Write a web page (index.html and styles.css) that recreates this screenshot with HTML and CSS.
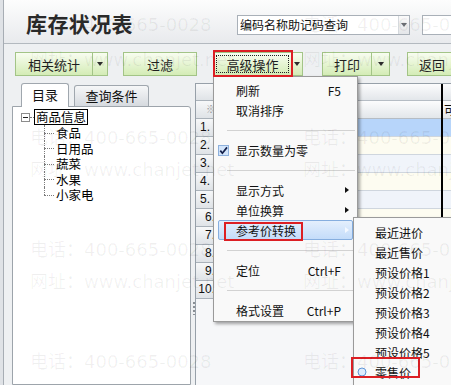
FILE: index.html
```html
<!DOCTYPE html>
<html lang="zh-CN">
<head>
<meta charset="utf-8">
<title>库存状况表</title>
<link rel="stylesheet" href="styles.css">
</head>
<body>
<div class="app">
  <header class="head">
    <h1 class="title">库存状况表</h1>
    <div class="combo">
      <span class="combo-text">编码名称助记码查询</span>
      <span class="combo-btn"><i class="tri-down light"></i></span>
    </div>
    <div class="search"></div>
  </header>

  <div class="toolbar">
    <div class="group">
      <div class="btn w-stat">相关统计</div>
      <div class="btn drop w15"><i class="tri-down"></i></div>
    </div>
    <div class="btn w-filter gap15">过滤</div>
    <div class="group gap16">
      <div class="btn w-adv focus">高级操作</div>
      <div class="btn drop w11"><i class="tri-down"></i></div>
    </div>
    <div class="group gap19">
      <div class="btn w-print">打印</div>
      <div class="btn drop w18"><i class="tri-down"></i></div>
    </div>
    <div class="btn w-back gap17">返回</div>
  </div>

  <div class="main">
    <aside class="side">
      <div class="tabs">
        <div class="tab active">目录</div>
        <div class="tab inactive">查询条件</div>
      </div>
      <div class="tree-panel">
        <div class="tree">
          <div class="root">
            <span class="expander"><span class="minus"></span></span>
            <span class="connector"></span>
            <span class="root-label">商品信息</span>
          </div>
          <ul class="children">
            <li>食品</li>
            <li>日用品</li>
            <li>蔬菜</li>
            <li>水果</li>
            <li>小家电</li>
          </ul>
        </div>
      </div>
    </aside>

    <div class="splitter"><span class="grip"></span></div>

    <section class="grid">
      <div class="grow ghead h1">
        <div class="rh"></div>
        <div class="c-main"></div>
        <div class="c-bar"></div>
        <div class="c-next"></div>
      </div>
      <div class="grow ghead h2">
        <div class="rh star">※</div>
        <div class="c-main"></div>
        <div class="c-bar"></div>
        <div class="c-next">可</div>
      </div>
      <div class="grow sel"><div class="rh">1.</div><div class="c-main"></div><div class="c-bar"></div><div class="c-next"></div></div>
      <div class="grow cream"><div class="rh">2.</div><div class="c-main"></div><div class="c-bar"></div><div class="c-next"></div></div>
      <div class="grow pale"><div class="rh">3.</div><div class="c-main"></div><div class="c-bar"></div><div class="c-next"></div></div>
      <div class="grow cream"><div class="rh">4.</div><div class="c-main"></div><div class="c-bar"></div><div class="c-next"></div></div>
      <div class="grow pale"><div class="rh">5.</div><div class="c-main"></div><div class="c-bar"></div><div class="c-next"></div></div>
      <div class="grow cream"><div class="rh rt">6.</div><div class="c-main"></div><div class="c-bar"></div><div class="c-next"></div></div>
      <div class="grow pale"><div class="rh rt">7.</div><div class="c-main"></div><div class="c-bar"></div><div class="c-next"></div></div>
      <div class="grow cream"><div class="rh rt">8.</div><div class="c-main"></div><div class="c-bar"></div><div class="c-next"></div></div>
      <div class="grow pale"><div class="rh rt">9.</div><div class="c-main"></div><div class="c-bar"></div><div class="c-next"></div></div>
      <div class="grow cream"><div class="rh rt">10.</div><div class="c-main"></div><div class="c-bar"></div><div class="c-next"></div></div>
    </section>
  </div>
</div>

<div class="menu main-menu">
  <div class="mi"><span class="ico"></span><span class="lbl">刷新</span><span class="key">F5</span><span class="sub"></span></div>
  <div class="mi"><span class="ico"></span><span class="lbl">取消排序</span><span class="key"></span><span class="sub"></span></div>
  <div class="sep"></div>
  <div class="mi"><span class="ico"><svg class="check" width="11" height="11" viewBox="0 0 11 11"><rect x="0.5" y="0.5" width="10" height="10" fill="#d3e5fb" stroke="#8db0dc"/><path d="M2.3 5.6 L4.4 8.2 L9 2.4" fill="none" stroke="#14204a" stroke-width="1.7"/></svg></span><span class="lbl">显示数量为零</span><span class="key"></span><span class="sub"></span></div>
  <div class="sep"></div>
  <div class="mi"><span class="ico"></span><span class="lbl">显示方式</span><span class="key"></span><span class="sub"><i class="tri-right"></i></span></div>
  <div class="mi"><span class="ico"></span><span class="lbl">单位换算</span><span class="key"></span><span class="sub"><i class="tri-right"></i></span></div>
  <div class="mi hot"><span class="ico"></span><span class="lbl">参考价转换</span><span class="key"></span><span class="sub"><i class="tri-right white"></i></span></div>
  <div class="sep"></div>
  <div class="mi"><span class="ico"></span><span class="lbl">定位</span><span class="key">Ctrl+F</span><span class="sub"></span></div>
  <div class="sep"></div>
  <div class="mi"><span class="ico"></span><span class="lbl">格式设置</span><span class="key">Ctrl+P</span><span class="sub"></span></div>
</div>

<div class="menu sub-menu">
  <div class="mi"><span class="ico2"></span><span class="lbl">最近进价</span></div>
  <div class="mi"><span class="ico2"></span><span class="lbl">最近售价</span></div>
  <div class="mi"><span class="ico2"></span><span class="lbl">预设价格1</span></div>
  <div class="mi"><span class="ico2"></span><span class="lbl">预设价格2</span></div>
  <div class="mi"><span class="ico2"></span><span class="lbl">预设价格3</span></div>
  <div class="mi"><span class="ico2"></span><span class="lbl">预设价格4</span></div>
  <div class="mi"><span class="ico2"></span><span class="lbl">预设价格5</span></div>
  <div class="mi"><span class="ico2"><svg width="10" height="10" viewBox="0 0 10 10"><circle cx="5" cy="5" r="4" fill="#dcebfd" stroke="#5f95d6" stroke-width="1"/></svg></span><span class="lbl">零售价</span></div>
</div>

<div class="mark mark-adv"></div>
<div class="mark mark-ref"></div>
<div class="mark mark-retail"></div>

<div class="wm">
  <span class="wl y1">电话：400-665-0028</span>
  <span class="wr y1">电话：400-665-0028</span>
  <span class="wl y2">网址：www.chanjet.net</span>
  <span class="wr y2">网址：www.chanjet.net</span>
  <span class="wl y3">电话：400-665-0028</span>
  <span class="wr y3">电话：400-665-0028</span>
  <span class="wl y4">网址：www.chanjet.net</span>
  <span class="wr y4">网址：www.chanjet.net</span>
  <span class="wl y5">电话：400-665-0028</span>
  <span class="wr y5">电话：400-665-0028</span>
  <span class="wl y6">网址：www.chanjet.net</span>
  <span class="wr y6">网址：www.chanjet.net</span>
  <span class="wl y7">电话：400-665-0028</span>
  <span class="wr y7">电话：400-665-0028</span>
  <span class="wl y8">网址：www.chanjet.net</span>
  <span class="wr y8">网址：www.chanjet.net</span>
</div>
</body>
</html>
```

FILE: styles.css
```css
* { box-sizing: border-box; }
html, body { margin: 0; padding: 0; }
body {
  width: 451px;
  height: 385px;
  overflow: hidden;
  position: relative;
  background: #dfe2e6;
  font-family: "Noto Sans CJK SC", sans-serif;
  font-size: 12px;
  color: #111;
}

.app {
  margin-left: 3px;
  height: 385px;
  border-left: 1px solid #a7adb4;
  background: #eef0f2;
  display: flex;
  flex-direction: column;
  overflow: hidden;
}

/* header */
.head {
  height: 44px;
  flex: none;
  display: flex;
  align-items: flex-start;
  background: linear-gradient(#fdfdfd, #e8eaed);
  border-bottom: 1px solid #b3b9bf;
  padding-left: 22px;
  overflow: hidden;
}
.title {
  margin: 0;
  width: 211px;
  flex: none;
  font-size: 21px;
  font-weight: 700;
  line-height: 24px;
  padding-top: 11px;
  color: #2a2a2a;
  letter-spacing: 0.4px;
}
.combo {
  margin-top: 15px;
  width: 173px;
  height: 20px;
  flex: none;
  display: flex;
  background: #fff;
  border: 1px solid #a9b0b8;
}
.combo-text {
  flex: 1;
  padding-left: 2px;
  line-height: 18px;
  font-size: 12px;
  color: #111;
}
.combo-btn {
  width: 11px;
  border-left: 1px solid #d5d9dd;
  background: linear-gradient(#fafafa, #e4e6e9);
  display: flex;
  align-items: center;
  justify-content: center;
}
.search {
  margin-top: 15px;
  margin-left: 12px;
  width: 60px;
  height: 20px;
  flex: none;
  background: #fff;
  border: 1px solid #a9b0b8;
}

.tri-down {
  display: block;
  width: 0;
  height: 0;
  border-left: 3.5px solid transparent;
  border-right: 3.5px solid transparent;
  border-top: 4px solid #2d2d2d;
}
.tri-down.light { border-top-color: #6a6f75; }

/* toolbar */
.toolbar {
  height: 36px;
  flex: none;
  display: flex;
  align-items: flex-start;
  padding: 8px 0 0 11px;
}
.group { display: flex; flex: none; }
.btn {
  height: 24px;
  flex: none;
  display: flex;
  align-items: center;
  justify-content: center;
  background: linear-gradient(#f8fdf0, #d4ecb6);
  border: 1px solid #a3c487;
  font-size: 13px;
  color: #1f1f1f;
  line-height: 1;
}
.drop { border-left: none; }
.w-stat { width: 78px; }
.w15 { width: 15px; }
.w11 { width: 11px; }
.w18 { width: 18px; }
.w-filter { width: 74px; }
.w-adv { width: 79px; }
.w-print { width: 50px; }
.w-back { width: 50px; }
.gap15 { margin-left: 15px; }
.gap16 { margin-left: 16px; }
.gap19 { margin-left: 19px; }
.gap17 { margin-left: 17px; }
.focus { outline: 1px dotted #222; outline-offset: -4px; }

/* main */
.main {
  flex: 1;
  min-height: 0;
  display: flex;
  padding-left: 8px;
}
.side {
  width: 179px;
  flex: none;
  display: flex;
  flex-direction: column;
  padding-top: 3px;
}
.tabs {
  height: 23px;
  display: flex;
  align-items: flex-end;
  gap: 5px;
  padding-left: 9px;
  position: relative;
  z-index: 1;
}
.tab {
  border: 1px solid #a0a7ae;
  border-bottom: none;
  border-radius: 3px 3px 0 0;
  font-size: 13px;
  text-align: center;
  color: #111;
}
.tab.active {
  width: 48px;
  height: 24px;
  line-height: 22px;
  background: #fff;
  margin-bottom: -1px;
}
.tab.inactive {
  width: 75px;
  height: 21px;
  line-height: 20px;
  background: linear-gradient(#f6f7f8, #d6dadf);
}
.tree-panel {
  flex: 1;
  background: #fff;
  border: 1px solid #9da4ab;
  border-radius: 0 3px 0 0;
}
.tree { padding: 2px 0 0 8px; }
.root {
  display: flex;
  align-items: center;
  height: 16px;
}
.expander {
  width: 9px;
  height: 9px;
  flex: none;
  border: 1px solid #8c8c8c;
  background: #fff;
  display: flex;
  align-items: center;
  justify-content: center;
}
.minus { width: 5px; height: 1px; background: #222; }
.connector {
  width: 4px;
  flex: none;
  border-top: 1px dotted #7a7a7a;
}
.root-label {
  border: 1px solid #000;
  padding: 0 1px;
  height: 16px;
  line-height: 14px;
  font-size: 12.5px;
  color: #000;
}
.children {
  list-style: none;
  margin: 0 0 0 23px;
  padding: 0;
}
.children li {
  position: relative;
  height: 15.5px;
  line-height: 15.5px;
  padding-left: 12px;
  font-size: 12.5px;
  color: #000;
}
.children li::before {
  content: "";
  position: absolute;
  left: 0;
  top: 50%;
  width: 10px;
  border-top: 1px dotted #7a7a7a;
}
.children li::after {
  content: "";
  position: absolute;
  left: 0;
  top: 0;
  bottom: 0;
  border-left: 1px dotted #7a7a7a;
}
.children li:last-child::after { bottom: 50%; }

.splitter {
  width: 4px;
  flex: none;
  display: flex;
  flex-direction: column;
}
.grip {
  width: 2px;
  height: 13px;
  margin: 222px 0 0 2px;
  background: repeating-linear-gradient(#8a8f95 0 2px, transparent 2px 4px);
}

/* grid */
.grid {
  flex: 1;
  min-width: 0;
  margin-top: 3px;
  border-left: 1px solid #97a0a9;
  border-top: 1px solid #97a0a9;
  background: #f6f7f9;
  display: flex;
  flex-direction: column;
  overflow: hidden;
}
.grow {
  display: flex;
  height: 18px;
  flex: none;
}
.grow.h1 { height: 17px; }
.ghead { background: linear-gradient(#fcfcfd, #e1e5e9); }
.ghead .c-main, .ghead .c-next { border-bottom: 1px solid #b5bcc4; }
.rh {
  width: 24px;
  flex: none;
  border-right: 1px solid #a9b1b9;
  border-bottom: 1px solid #a9b1b9;
  background: linear-gradient(#f7f8f9, #dfe3e7);
  font-family: "Liberation Sans", sans-serif;
  font-size: 12px;
  line-height: 17px;
  padding-left: 4px;
  color: #111;
  overflow: hidden;
  white-space: nowrap;
}
.rh.rt { text-align: right; padding: 0 4px 0 0; }
.rh.star { color: #9a9a9a; padding-left: 10px; font-size: 10px; }
.c-main {
  width: 221px;
  flex: none;
  border-bottom: 1px solid #cfd6de;
}
.c-bar { width: 2px; flex: none; background: #000; }
.c-next {
  flex: 1;
  border-bottom: 1px solid #cfd6de;
  padding-left: 1px;
  font-size: 12px;
  line-height: 17px;
  white-space: nowrap;
  overflow: hidden;
}
.sel .c-main, .sel .c-next { background: #b7d5fa; }
.cream .c-main, .cream .c-next { background: #fdfcf1; }
.pale .c-main, .pale .c-next { background: #f0f4fa; }

/* menus */
.menu {
  position: absolute;
  background: #f9f9f9;
  border: 1px solid #9a9a9a;
  box-shadow: 2px 2px 3px rgba(0, 0, 0, 0.35);
  z-index: 5;
  font-size: 12px;
  color: #111;
}
.main-menu {
  left: 213px;
  top: 76px;
  width: 145px;
  padding: 3px 2px 1px;
}
.sub-menu {
  left: 353px;
  top: 217px;
  width: 105px;
  padding: 4px 2px;
  z-index: 6;
}
.mi {
  height: 20px;
  display: flex;
  align-items: center;
  margin: 0 2px;
  border: 1px solid transparent;
  border-radius: 2px;
  white-space: nowrap;
}
.sub-menu .mi { margin: 0; }
.ico {
  width: 17px;
  flex: none;
  display: flex;
  align-items: center;
}
.check { margin-left: -1px; display: block; }
.ico2 {
  width: 18px;
  flex: none;
  display: flex;
  align-items: center;
}
.ico2 svg { display: block; }
.lbl { flex: 1; }
.key { flex: none; }
.sub {
  width: 11px;
  flex: none;
  display: flex;
  align-items: center;
  padding-left: 4px;
}
.tri-right {
  display: block;
  width: 0;
  height: 0;
  border-top: 3.5px solid transparent;
  border-bottom: 3.5px solid transparent;
  border-left: 4px solid #111;
}
.tri-right.white { border-left-color: #f4f8ff; }
.hot {
  background: linear-gradient(#e4effd, #c4dcfa);
  border-color: #86aedf;
}
.sep {
  height: 1px;
  background: #d2d2d2;
  margin: 10px 0 9px 11px;
}

/* red annotation boxes */
.mark {
  position: absolute;
  border: 2px solid #dc1f24;
  z-index: 8;
}
.mark-adv { left: 213px; top: 50px; width: 80px; height: 27px; }
.mark-ref { left: 224px; top: 222px; width: 79px; height: 19px; }
.mark-retail { left: 351px; top: 357px; width: 69px; height: 21px; }

/* watermark overlay */
.wm {
  position: absolute;
  inset: 0;
  pointer-events: none;
  z-index: 10;
  font-family: "DejaVu Sans", "Noto Sans CJK SC", sans-serif;
  font-size: 18px;
  color: rgba(0, 0, 0, 0.06);
}
.wm span { position: absolute; white-space: nowrap; line-height: 20px; }
.wl { left: 30px; }
.wr { left: 303px; }
.y1 { top: 15px; }
.y2 { top: 50px; }
.y3 { top: 128px; }
.y4 { top: 160px; }
.y5 { top: 240px; }
.y6 { top: 272px; }
.y7 { top: 352px; }
.y8 { top: 384px; }
```
